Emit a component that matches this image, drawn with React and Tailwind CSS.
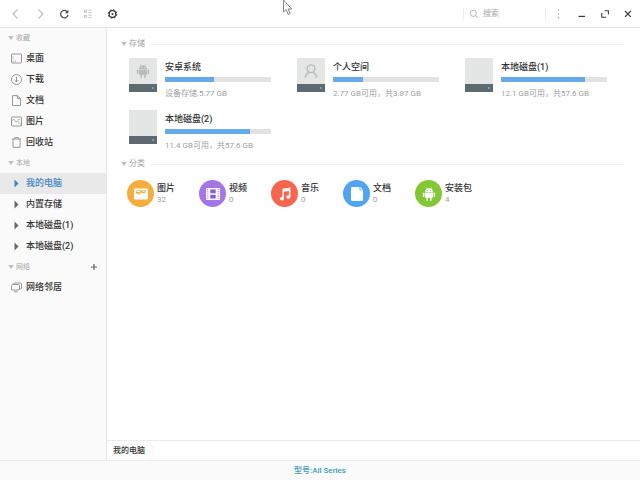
import { useState } from 'react';
import clsx from 'clsx';

const ICON = 'h-[11px] w-[11px] shrink-0 fill-none stroke-[#8f8f8f]';

const DesktopIcon = () => (
  <svg viewBox="0 0 11 11" className={ICON} strokeWidth="0.9">
    <rect x="0.5" y="1" width="10" height="9" rx="0.5" />
    <path d="M1.8 8.2h1M4 8.2h1" />
    <path d="M2.2 3v3.5" strokeWidth="0.4" />
  </svg>
);

const DownloadIcon = () => (
  <svg viewBox="0 0 11 11" className={ICON} strokeWidth="0.9">
    <circle cx="5.5" cy="5.5" r="5" />
    <path d="M5.5 2.8v5M3.6 6l1.9 1.9L7.4 6" />
  </svg>
);

const DocIcon = () => (
  <svg viewBox="0 0 11 11" className={ICON} strokeWidth="0.9">
    <path d="M1.5 0.6h5l3 3v6.9h-8zM6.5 0.6v3h3" />
  </svg>
);

const PictureIcon = () => (
  <svg viewBox="0 0 11 11" className={ICON} strokeWidth="0.9">
    <rect x="0.5" y="1" width="10" height="9" rx="0.5" />
    <path d="M1 4.5l1.8-1.2L5 6l1.5-1L10 8.4" strokeWidth="0.7" />
    <circle cx="8" cy="3.6" r="0.6" strokeWidth="0.6" />
  </svg>
);

const TrashIcon = () => (
  <svg viewBox="0 0 11 11" className={ICON} strokeWidth="0.9">
    <path d="M1 2h9M3.7 1.9V0.6h3.6v1.3M2 2v8.4h7V2" />
  </svg>
);

const NetworkIcon = () => (
  <svg viewBox="0 0 11 11" className={ICON} strokeWidth="0.9">
    <path d="M2.5 2.3V2a1 1 0 0 1 1-1h6a1 1 0 0 1 1 1v4a1 1 0 0 1-1 1H8.8" />
    <rect x="0.5" y="2.5" width="8" height="5.5" rx="1" />
    <path d="M3 9.7h3.4" />
  </svg>
);

const ArrowRight = ({ active }) => (
  <svg viewBox="0 0 11 11" className={clsx('h-[11px] w-[11px] shrink-0', active ? 'fill-[#3a87c8]' : 'fill-[#666666]')}>
    <path d="M3.5 1.5v8L7.5 5.5z" />
  </svg>
);

const Caret = () => (
  <svg viewBox="0 0 6 4" className="h-1 w-1.5 shrink-0 fill-[#bdbdbd]">
    <path d="M0.3 0h5.4L3 4z" />
  </svg>
);

const Robot = ({ className, eyes }) => (
  <svg viewBox="0 0 16 16" className={className}>
    <path d="M3.5 5.6C3.6 3.8 4.4 2.7 5.6 2L4.8 0.7l0.5-0.3 0.9 1.4a5 5 0 0 1 3.6 0l0.9-1.4 0.5 0.3L10.4 2c1.2 0.7 2 1.8 2.1 3.6z" />
    <path d="M3.5 6.2h9v6H11V15a0.9 0.9 0 0 1-1.8 0v-2.8H6.8V15A0.9 0.9 0 0 1 5 15v-2.8H3.5z" />
    <rect x="1" y="6.2" width="1.8" height="5.3" rx="0.9" />
    <rect x="13.2" y="6.2" width="1.8" height="5.3" rx="0.9" />
    <g className={eyes}>
      <circle cx="6" cy="4" r="0.6" />
      <circle cx="10" cy="4" r="0.6" />
    </g>
  </svg>
);

const Person = () => (
  <svg viewBox="0 0 14 16" className="h-4 w-3.5 fill-none stroke-[#b8bbbb]" strokeWidth="1.4">
    <circle cx="7" cy="5.7" r="3.8" />
    <path d="M1.3 14.8c0.3-3.2 2-4.8 4.2-5.4M12.7 14.8c-0.3-3.2-2-4.8-4.2-5.4" />
  </svg>
);

const favorites = [
  { name: '桌面', Icon: DesktopIcon },
  { name: '下载', Icon: DownloadIcon },
  { name: '文档', Icon: DocIcon },
  { name: '图片', Icon: PictureIcon },
  { name: '回收站', Icon: TrashIcon },
];
const places = ['我的电脑', '内置存储', '本地磁盘(1)', '本地磁盘(2)'].map((name) => ({ name, Icon: ArrowRight }));
const network = [{ name: '网络邻居', Icon: NetworkIcon }];

const disks = [
  {
    name: '安卓系统',
    info: '设备存储:5.77 GB',
    used: 46,
    icon: <Robot className="h-3.5 w-3.5 fill-[#b8bbbb]" eyes="fill-[#e4e6e6]" />,
  },
  { name: '个人空间', info: '2.77 GB可用，共3.87 GB', used: 28, icon: <Person /> },
  { name: '本地磁盘(1)', info: '12.1 GB可用，共57.6 GB', used: 79 },
  { name: '本地磁盘(2)', info: '11.4 GB可用，共57.6 GB', used: 80 },
];

const categories = [
  {
    name: '图片',
    count: 32,
    color: 'bg-[#f5ae3d]',
    icon: (
      <svg viewBox="0 0 14 12" className="h-3 w-3.5">
        <rect y="0.5" width="14" height="11" rx="1.2" fill="#fff" />
        <path d="M2 5.2V3.2l2.8 1.3L7.6 2.6 9.4 4l2.4-1.3v1.6L9.4 5.6 7.6 4.4 4.8 6.6z" fill="#f5ae3d" />
        <path d="M2 2.4h10" stroke="#f5ae3d" strokeWidth="0.7" />
      </svg>
    ),
  },
  {
    name: '视频',
    count: 0,
    color: 'bg-[#a675e8]',
    icon: (
      <svg viewBox="0 0 14 12" className="h-3 w-3.5">
        <rect width="14" height="12" rx="0.8" fill="#fff" />
        <path d="M4.3 1.6h5.4v3.6H4.3zM4.3 6.8h5.4v3.6H4.3z" fill="#8c5bd0" />
        <path d="M1.8 1v10M12.2 1v10" stroke="#a675e8" strokeWidth="1" strokeDasharray="1.2 1" />
      </svg>
    ),
  },
  {
    name: '音乐',
    count: 0,
    color: 'bg-[#f7654c]',
    icon: (
      <svg viewBox="0 0 12 14" className="h-3.5 w-3 fill-white">
        <path d="M3.4 1.7L11.4 0.4v9.3h-1.5V4L4.9 4.8v6.8H3.4z" />
        <ellipse cx="2.9" cy="11.7" rx="2.1" ry="1.8" />
        <ellipse cx="9.3" cy="10.1" rx="2.1" ry="1.8" />
      </svg>
    ),
  },
  {
    name: '文档',
    count: 0,
    color: 'bg-[#4fa4f3]',
    icon: (
      <svg viewBox="0 0 12 14" className="h-3.5 w-3 fill-white">
        <path d="M1 0h7.5v3.2H12V13a1 1 0 0 1-1 1H1a1 1 0 0 1-1-1V1a1 1 0 0 1 1-1z" />
        <path d="M9.3 0L12 2.5H9.3z" />
      </svg>
    ),
  },
  {
    name: '安装包',
    count: 4,
    color: 'bg-[#81c832]',
    icon: <Robot className="h-3.5 w-3.5 fill-white" eyes="fill-[#81c832]" />,
  },
];

function NavGroup({ title, items, active, onSelect, action }) {
  return (
    <section>
      <div className="flex h-5 items-center gap-0.5 pr-2 pl-2 text-[7px] text-[#a5a5a5]">
        <Caret />
        <h2 className="flex-1">{title}</h2>
        {action}
      </div>
      <ul>
        {items.map(({ name, Icon }) => (
          <li key={name}>
            <button
              type="button"
              onClick={() => onSelect(name)}
              className={clsx(
                'flex h-[21px] w-full items-center gap-1 pl-[11px] text-left text-[9px] font-medium',
                active === name ? 'bg-[#e9e9e9] text-[#3a87c8]' : 'text-[#333333]'
              )}
            >
              <Icon active={active === name} />
              {name}
            </button>
          </li>
        ))}
      </ul>
    </section>
  );
}

function SectionTitle({ children }) {
  return (
    <div className="flex h-4 items-center gap-0.5 pr-4 pl-3.5 text-[8px] text-[#a0a0a0]">
      <Caret />
      <h2>{children}</h2>
      <div className="ml-1 h-px flex-1 bg-[#eeeeee]" />
    </div>
  );
}

function Disk({ name, info, used, icon }) {
  return (
    <li className="flex gap-2">
      <div className="flex h-[34px] w-7 shrink-0 flex-col bg-[#e4e6e6]">
        <div className="flex flex-1 items-center justify-center">{icon}</div>
        <div className="flex h-2 items-center justify-end bg-[#5f6a70] pr-[3px]">
          <span className="h-0.5 w-0.5 bg-[#5fa3c4]" />
        </div>
      </div>
      <div>
        <h3 className="mt-[3px] text-[9px] leading-3 font-medium text-[#333333]">{name}</h3>
        <div
          role="progressbar"
          aria-label={name}
          aria-valuenow={used}
          className="mt-1 h-[5px] w-[106px] overflow-hidden rounded-[1px] bg-[#e2e2e2]"
        >
          <div className="h-full bg-[#65aaea]" style={{ width: `${used}%` }} />
        </div>
        <p className="mt-1.5 text-[8px] leading-3 whitespace-nowrap text-[#a0a0a0]">{info}</p>
      </div>
    </li>
  );
}

function Toolbar() {
  return (
    <header className="flex h-7 items-center justify-between border-b border-[#e4e4e4] bg-white">
      <div className="flex items-center gap-3 pl-2.5">
        <button type="button" aria-label="后退">
          <svg viewBox="0 0 12 12" className="h-3 w-3 fill-none stroke-[#bbbbbb]" strokeWidth="1.1">
            <path d="M7.5 1.5L3 6l4.5 4.5" />
          </svg>
        </button>
        <button type="button" aria-label="前进">
          <svg viewBox="0 0 12 12" className="h-3 w-3 fill-none stroke-[#bbbbbb]" strokeWidth="1.1">
            <path d="M4.5 1.5L9 6l-4.5 4.5" />
          </svg>
        </button>
        <button type="button" aria-label="刷新">
          <svg viewBox="0 0 12 12" className="h-3 w-3 fill-none stroke-[#4a4a4a]" strokeWidth="1.2">
            <path d="M9.3 3.9A3.7 3.7 0 1 0 10 6.8" />
            <path d="M10.4 1.8v3.5H6.9z" fill="#4a4a4a" stroke="none" />
          </svg>
        </button>
        <button type="button" aria-label="视图">
          <svg viewBox="0 0 12 12" className="h-3 w-3 fill-none stroke-[#b0b0b0]" strokeWidth="0.8">
            <path d="M2.4 2.4h2v2h-2zM2.4 7.4h2v2h-2zM6.5 2h3M6.5 4.6h3M6.5 7.2h3M6.5 9.6h3" />
          </svg>
        </button>
        <button type="button" aria-label="设置">
          <svg viewBox="0 0 12 12" className="h-3 w-3 fill-none stroke-[#3c3c3c]">
            <circle cx="6.5" cy="6" r="3.3" strokeWidth="1.3" />
            <circle cx="6.5" cy="6" r="4.3" strokeWidth="1" strokeDasharray="1.7 1.677" />
            <circle cx="6.5" cy="6" r="1.1" fill="#3c3c3c" stroke="none" />
          </svg>
        </button>
      </div>
      <div className="flex items-center pr-1.5">
        <label className="flex items-center gap-1 border-x border-[#ececec] pl-[5px]">
          <svg viewBox="0 0 10 10" className="h-2.5 w-2.5 fill-none stroke-[#aaaaaa]" strokeWidth="0.9">
            <circle cx="4.3" cy="4.3" r="3.1" />
            <path d="M6.6 6.6l2.4 2.6" />
          </svg>
          <input
            type="search"
            aria-label="搜索"
            placeholder="搜索"
            className="h-3 w-[62px] text-[8px] outline-none placeholder:text-[#a5a5a5]"
          />
        </label>
        <div className="flex items-center gap-[11px] pl-[7px]">
          <button type="button" aria-label="菜单">
            <svg viewBox="0 0 12 12" className="h-3 w-3 fill-[#a8a8a8]">
              <path d="M4.8 1.5h1.3v1.3H4.8zM4.8 5.3h1.3v1.3H4.8zM4.8 9.1h1.3v1.3H4.8z" />
            </svg>
          </button>
          <button type="button" aria-label="最小化">
            <svg viewBox="0 0 12 12" className="h-3 w-3 stroke-[#3c3c3c]" strokeWidth="1.2">
              <path d="M2.5 8.4h6.5" />
            </svg>
          </button>
          <button type="button" aria-label="最大化">
            <svg viewBox="0 0 12 12" className="h-3 w-3 fill-none stroke-[#3c3c3c]" strokeWidth="1.1">
              <path d="M5.6 2.8h3.8v3.8M2.8 5v4.3h4.3" />
            </svg>
          </button>
          <button type="button" aria-label="关闭">
            <svg viewBox="0 0 12 12" className="h-3 w-3 stroke-[#3c3c3c]" strokeWidth="1.2">
              <path d="M3 3l5.8 5.8M8.8 3L3 8.8" />
            </svg>
          </button>
        </div>
      </div>
    </header>
  );
}

export default function App() {
  const [active, setActive] = useState('我的电脑');

  return (
    <div className="relative flex min-h-screen flex-col bg-white font-[Roboto,'Noto_Sans_CJK_SC',sans-serif]">
      <Toolbar />

      <div className="flex flex-1">
        <nav className="w-[107px] shrink-0 border-r border-[#e6e6e6] bg-[#fafafa]">
          <NavGroup title="收藏" items={favorites} active={active} onSelect={setActive} />
          <NavGroup title="本地" items={places} active={active} onSelect={setActive} />
          <NavGroup
            title="网络"
            items={network}
            active={active}
            onSelect={setActive}
            action={
              <button type="button" aria-label="添加">
                <svg viewBox="0 0 8 8" className="h-2 w-2 stroke-[#666666]" strokeWidth="1.2">
                  <path d="M4 1v6M1 4h6" />
                </svg>
              </button>
            }
          />
        </nav>

        <div className="flex min-w-0 flex-1 flex-col">
          <main className="flex-1 pt-2">
            <SectionTitle>存储</SectionTitle>
            <ul className="mt-1.5 grid grid-cols-[repeat(auto-fill,168px)] gap-y-2.5 pl-[22px]">
              {disks.map((disk) => (
                <Disk key={disk.name} {...disk} />
              ))}
            </ul>

            <div className="mt-1">
              <SectionTitle>分类</SectionTitle>
            </div>
            <ul className="mt-2 grid grid-cols-[repeat(auto-fill,72px)] gap-y-4 pl-5">
              {categories.map(({ name, count, color, icon }) => (
                <li key={name} className="flex items-center gap-[3px]">
                  <div className={clsx('flex h-[27px] w-[27px] items-center justify-center rounded-full', color)}>{icon}</div>
                  <div>
                    <h3 className="text-[9px] leading-3 font-medium text-[#333333]">{name}</h3>
                    <p className="text-[8px] leading-3 text-[#a0a0a0]">{count}</p>
                  </div>
                </li>
              ))}
            </ul>
          </main>
          <div className="flex h-5 items-center border-t border-[#ebebeb] pl-1.5 text-[8px] font-medium text-[#333333]">
            <span>{active}</span>
            <svg viewBox="0 0 6 18" className="ml-1 h-[18px] w-1.5 fill-none stroke-[#f3f3f3]">
              <path d="M1 0l4 9-4 9" />
            </svg>
          </div>
        </div>
      </div>

      <footer className="flex h-5 items-center justify-center border-t border-[#ebebeb] bg-[#fafafa] text-[8px] font-medium text-[#3b9dba]">
        型号:All Series
      </footer>

      {/* mouse pointer */}
      <svg viewBox="0 0 11 16" className="pointer-events-none absolute top-0 left-[282px] h-4 w-[11px] fill-white stroke-[#777777]" strokeWidth="0.9">
        <path d="M1.5 0v12l2.7-2.4 2 4.8 1.9-0.8-2-4.6h3.6z" />
      </svg>
    </div>
  );
}
